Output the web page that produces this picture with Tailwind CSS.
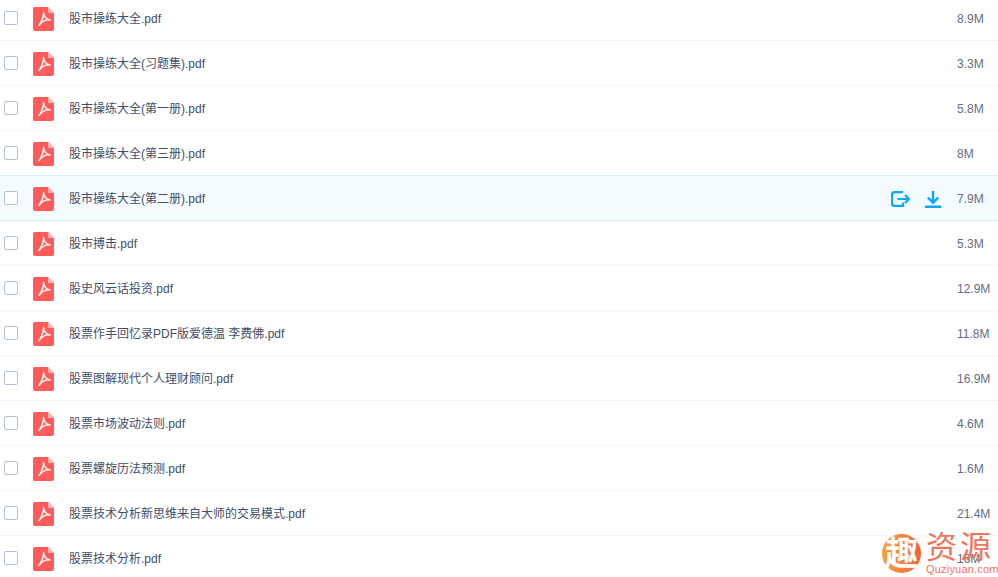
<!DOCTYPE html>
<html lang="en">
<head>
    <meta charset="UTF-8">
    <script src="https://cdn.jsdelivr.net/npm/@tailwindcss/browser@4"></script>
    <title>Files</title>
</head>
<body class="bg-white overflow-hidden h-[577px] relative font-['Liberation_Sans','Noto_Sans_CJK_SC',sans-serif] text-xs text-[#424e67]">

    <!-- File list -->
    <div class="flex flex-col -mt-[4px]">
        <div class="flex items-center h-[45px] border-b border-[#f2f6fd]">
            <span class="w-[14px] h-[14px] ml-[4px] border border-[#b4c2d4] rounded-[2px] bg-white"></span>
            <svg class="w-[21px] h-[24px] ml-[15px] mt-[2px]" viewBox="0 0 21 24"><path d="M2 0h13l6 6v16a2 2 0 0 1-2 2H2a2 2 0 0 1-2-2V2a2 2 0 0 1 2-2z" fill="#ff5b5b"/><path d="M15 0l6 6h-6z" fill="#ffb3b3"/><path d="M10.500 5.500c.3 3.500 2.500 6.500 6.500 7.500c-3.800-.6-7.500 .7-11 5.500c2.600-4 4.800-7.500 4.500-13z" fill="none" stroke="#fff" stroke-width="1.400" stroke-linejoin="round"/></svg>
            <span class="ml-[15px] flex-1 mt-[1px]">股市操练大全.pdf</span>
            <span class="w-[41px] text-[#636d7e] mt-[1px]">8.9M</span>
        </div>
        <div class="flex items-center h-[45px] border-b border-[#f2f6fd]">
            <span class="w-[14px] h-[14px] ml-[4px] border border-[#b4c2d4] rounded-[2px] bg-white"></span>
            <svg class="w-[21px] h-[24px] ml-[15px] mt-[2px]" viewBox="0 0 21 24"><path d="M2 0h13l6 6v16a2 2 0 0 1-2 2H2a2 2 0 0 1-2-2V2a2 2 0 0 1 2-2z" fill="#ff5b5b"/><path d="M15 0l6 6h-6z" fill="#ffb3b3"/><path d="M10.500 5.500c.3 3.500 2.500 6.500 6.500 7.500c-3.800-.6-7.500 .7-11 5.500c2.600-4 4.800-7.500 4.500-13z" fill="none" stroke="#fff" stroke-width="1.400" stroke-linejoin="round"/></svg>
            <span class="ml-[15px] flex-1 mt-[1px]">股市操练大全(习题集).pdf</span>
            <span class="w-[41px] text-[#636d7e] mt-[1px]">3.3M</span>
        </div>
        <div class="flex items-center h-[45px] border-b border-[#f2f6fd]">
            <span class="w-[14px] h-[14px] ml-[4px] border border-[#b4c2d4] rounded-[2px] bg-white"></span>
            <svg class="w-[21px] h-[24px] ml-[15px] mt-[2px]" viewBox="0 0 21 24"><path d="M2 0h13l6 6v16a2 2 0 0 1-2 2H2a2 2 0 0 1-2-2V2a2 2 0 0 1 2-2z" fill="#ff5b5b"/><path d="M15 0l6 6h-6z" fill="#ffb3b3"/><path d="M10.500 5.500c.3 3.500 2.500 6.500 6.500 7.500c-3.800-.6-7.500 .7-11 5.500c2.600-4 4.800-7.500 4.500-13z" fill="none" stroke="#fff" stroke-width="1.400" stroke-linejoin="round"/></svg>
            <span class="ml-[15px] flex-1 mt-[1px]">股市操练大全(第一册).pdf</span>
            <span class="w-[41px] text-[#636d7e] mt-[1px]">5.8M</span>
        </div>
        <div class="flex items-center h-[45px] border-b border-[#f2f6fd]">
            <span class="w-[14px] h-[14px] ml-[4px] border border-[#b4c2d4] rounded-[2px] bg-white"></span>
            <svg class="w-[21px] h-[24px] ml-[15px] mt-[2px]" viewBox="0 0 21 24"><path d="M2 0h13l6 6v16a2 2 0 0 1-2 2H2a2 2 0 0 1-2-2V2a2 2 0 0 1 2-2z" fill="#ff5b5b"/><path d="M15 0l6 6h-6z" fill="#ffb3b3"/><path d="M10.500 5.500c.3 3.500 2.500 6.500 6.500 7.500c-3.800-.6-7.500 .7-11 5.500c2.600-4 4.800-7.500 4.500-13z" fill="none" stroke="#fff" stroke-width="1.400" stroke-linejoin="round"/></svg>
            <span class="ml-[15px] flex-1 mt-[1px]">股市操练大全(第三册).pdf</span>
            <span class="w-[41px] text-[#636d7e] mt-[1px]">8M</span>
        </div>
        <!-- Hovered row -->
        <div class="flex items-center h-[45px] border-b border-[#daf0fd] bg-[#f4fbff] shadow-[0_-1px_0_#daf0fd]">
            <span class="w-[14px] h-[14px] ml-[4px] border border-[#b4c2d4] rounded-[2px] bg-white"></span>
            <svg class="w-[21px] h-[24px] ml-[15px] mt-[2px]" viewBox="0 0 21 24"><path d="M2 0h13l6 6v16a2 2 0 0 1-2 2H2a2 2 0 0 1-2-2V2a2 2 0 0 1 2-2z" fill="#ff5b5b"/><path d="M15 0l6 6h-6z" fill="#ffb3b3"/><path d="M10.500 5.500c.3 3.500 2.500 6.500 6.500 7.500c-3.800-.6-7.500 .7-11 5.500c2.600-4 4.800-7.500 4.500-13z" fill="none" stroke="#fff" stroke-width="1.400" stroke-linejoin="round"/></svg>
            <span class="ml-[15px] flex-1 mt-[1px]">股市操练大全(第二册).pdf</span>
            <svg class="w-[19px] h-[16px] mr-[15px] mt-[2px]" viewBox="0 0 19 16" fill="none" stroke="#06a7ff" stroke-width="2.200"><path d="M12 1.100H3.500a2.400 2.400 0 0 0-2.400 2.400v9a2.400 2.400 0 0 0 2.400 2.400H12V11.500"/><path d="M6.500 8h11M14 4l4 4l-4 4"/></svg>
            <svg class="w-[16px] h-[17px] mr-[16px] mt-[2px]" viewBox="0 0 16 17" fill="none" stroke="#06a7ff" stroke-width="2.400"><path d="M8 0v11M2.800 6.500L8 11.700l5.200-5.200M0 15.700h16"/></svg>
            <span class="w-[41px] text-[#636d7e] mt-[1px]">7.9M</span>
        </div>
        <div class="flex items-center h-[45px] border-b border-[#f2f6fd]">
            <span class="w-[14px] h-[14px] ml-[4px] border border-[#b4c2d4] rounded-[2px] bg-white"></span>
            <svg class="w-[21px] h-[24px] ml-[15px] mt-[2px]" viewBox="0 0 21 24"><path d="M2 0h13l6 6v16a2 2 0 0 1-2 2H2a2 2 0 0 1-2-2V2a2 2 0 0 1 2-2z" fill="#ff5b5b"/><path d="M15 0l6 6h-6z" fill="#ffb3b3"/><path d="M10.500 5.500c.3 3.500 2.500 6.500 6.500 7.500c-3.800-.6-7.500 .7-11 5.500c2.600-4 4.800-7.500 4.500-13z" fill="none" stroke="#fff" stroke-width="1.400" stroke-linejoin="round"/></svg>
            <span class="ml-[15px] flex-1 mt-[1px]">股市搏击.pdf</span>
            <span class="w-[41px] text-[#636d7e] mt-[1px]">5.3M</span>
        </div>
        <div class="flex items-center h-[45px] border-b border-[#f2f6fd]">
            <span class="w-[14px] h-[14px] ml-[4px] border border-[#b4c2d4] rounded-[2px] bg-white"></span>
            <svg class="w-[21px] h-[24px] ml-[15px] mt-[2px]" viewBox="0 0 21 24"><path d="M2 0h13l6 6v16a2 2 0 0 1-2 2H2a2 2 0 0 1-2-2V2a2 2 0 0 1 2-2z" fill="#ff5b5b"/><path d="M15 0l6 6h-6z" fill="#ffb3b3"/><path d="M10.500 5.500c.3 3.500 2.500 6.500 6.500 7.500c-3.800-.6-7.500 .7-11 5.500c2.600-4 4.800-7.500 4.500-13z" fill="none" stroke="#fff" stroke-width="1.400" stroke-linejoin="round"/></svg>
            <span class="ml-[15px] flex-1 mt-[1px]">股史风云话投资.pdf</span>
            <span class="w-[41px] text-[#636d7e] mt-[1px]">12.9M</span>
        </div>
        <div class="flex items-center h-[45px] border-b border-[#f2f6fd]">
            <span class="w-[14px] h-[14px] ml-[4px] border border-[#b4c2d4] rounded-[2px] bg-white"></span>
            <svg class="w-[21px] h-[24px] ml-[15px] mt-[2px]" viewBox="0 0 21 24"><path d="M2 0h13l6 6v16a2 2 0 0 1-2 2H2a2 2 0 0 1-2-2V2a2 2 0 0 1 2-2z" fill="#ff5b5b"/><path d="M15 0l6 6h-6z" fill="#ffb3b3"/><path d="M10.500 5.500c.3 3.500 2.500 6.500 6.500 7.500c-3.800-.6-7.500 .7-11 5.500c2.600-4 4.800-7.500 4.500-13z" fill="none" stroke="#fff" stroke-width="1.400" stroke-linejoin="round"/></svg>
            <span class="ml-[15px] flex-1 mt-[1px]">股票作手回忆录PDF版爱德温 李费佛.pdf</span>
            <span class="w-[41px] text-[#636d7e] mt-[1px]">11.8M</span>
        </div>
        <div class="flex items-center h-[45px] border-b border-[#f2f6fd]">
            <span class="w-[14px] h-[14px] ml-[4px] border border-[#b4c2d4] rounded-[2px] bg-white"></span>
            <svg class="w-[21px] h-[24px] ml-[15px] mt-[2px]" viewBox="0 0 21 24"><path d="M2 0h13l6 6v16a2 2 0 0 1-2 2H2a2 2 0 0 1-2-2V2a2 2 0 0 1 2-2z" fill="#ff5b5b"/><path d="M15 0l6 6h-6z" fill="#ffb3b3"/><path d="M10.500 5.500c.3 3.500 2.500 6.500 6.500 7.500c-3.800-.6-7.500 .7-11 5.500c2.600-4 4.800-7.500 4.500-13z" fill="none" stroke="#fff" stroke-width="1.400" stroke-linejoin="round"/></svg>
            <span class="ml-[15px] flex-1 mt-[1px]">股票图解现代个人理财顾问.pdf</span>
            <span class="w-[41px] text-[#636d7e] mt-[1px]">16.9M</span>
        </div>
        <div class="flex items-center h-[45px] border-b border-[#f2f6fd]">
            <span class="w-[14px] h-[14px] ml-[4px] border border-[#b4c2d4] rounded-[2px] bg-white"></span>
            <svg class="w-[21px] h-[24px] ml-[15px] mt-[2px]" viewBox="0 0 21 24"><path d="M2 0h13l6 6v16a2 2 0 0 1-2 2H2a2 2 0 0 1-2-2V2a2 2 0 0 1 2-2z" fill="#ff5b5b"/><path d="M15 0l6 6h-6z" fill="#ffb3b3"/><path d="M10.500 5.500c.3 3.500 2.500 6.500 6.500 7.500c-3.800-.6-7.500 .7-11 5.500c2.600-4 4.800-7.500 4.500-13z" fill="none" stroke="#fff" stroke-width="1.400" stroke-linejoin="round"/></svg>
            <span class="ml-[15px] flex-1 mt-[1px]">股票市场波动法则.pdf</span>
            <span class="w-[41px] text-[#636d7e] mt-[1px]">4.6M</span>
        </div>
        <div class="flex items-center h-[45px] border-b border-[#f2f6fd]">
            <span class="w-[14px] h-[14px] ml-[4px] border border-[#b4c2d4] rounded-[2px] bg-white"></span>
            <svg class="w-[21px] h-[24px] ml-[15px] mt-[2px]" viewBox="0 0 21 24"><path d="M2 0h13l6 6v16a2 2 0 0 1-2 2H2a2 2 0 0 1-2-2V2a2 2 0 0 1 2-2z" fill="#ff5b5b"/><path d="M15 0l6 6h-6z" fill="#ffb3b3"/><path d="M10.500 5.500c.3 3.500 2.500 6.500 6.500 7.500c-3.800-.6-7.500 .7-11 5.500c2.600-4 4.800-7.500 4.500-13z" fill="none" stroke="#fff" stroke-width="1.400" stroke-linejoin="round"/></svg>
            <span class="ml-[15px] flex-1 mt-[1px]">股票螺旋历法预测.pdf</span>
            <span class="w-[41px] text-[#636d7e] mt-[1px]">1.6M</span>
        </div>
        <div class="flex items-center h-[45px] border-b border-[#f2f6fd]">
            <span class="w-[14px] h-[14px] ml-[4px] border border-[#b4c2d4] rounded-[2px] bg-white"></span>
            <svg class="w-[21px] h-[24px] ml-[15px] mt-[2px]" viewBox="0 0 21 24"><path d="M2 0h13l6 6v16a2 2 0 0 1-2 2H2a2 2 0 0 1-2-2V2a2 2 0 0 1 2-2z" fill="#ff5b5b"/><path d="M15 0l6 6h-6z" fill="#ffb3b3"/><path d="M10.500 5.500c.3 3.500 2.500 6.500 6.500 7.500c-3.800-.6-7.500 .7-11 5.500c2.600-4 4.800-7.500 4.500-13z" fill="none" stroke="#fff" stroke-width="1.400" stroke-linejoin="round"/></svg>
            <span class="ml-[15px] flex-1 mt-[1px]">股票技术分析新思维来自大师的交易模式.pdf</span>
            <span class="w-[41px] text-[#636d7e] mt-[1px]">21.4M</span>
        </div>
        <div class="flex items-center h-[45px] border-b border-[#f2f6fd]">
            <span class="w-[14px] h-[14px] ml-[4px] border border-[#b4c2d4] rounded-[2px] bg-white"></span>
            <svg class="w-[21px] h-[24px] ml-[15px] mt-[2px]" viewBox="0 0 21 24"><path d="M2 0h13l6 6v16a2 2 0 0 1-2 2H2a2 2 0 0 1-2-2V2a2 2 0 0 1 2-2z" fill="#ff5b5b"/><path d="M15 0l6 6h-6z" fill="#ffb3b3"/><path d="M10.500 5.500c.3 3.500 2.500 6.500 6.500 7.500c-3.800-.6-7.500 .7-11 5.500c2.600-4 4.800-7.500 4.500-13z" fill="none" stroke="#fff" stroke-width="1.400" stroke-linejoin="round"/></svg>
            <span class="ml-[15px] flex-1 mt-[1px]">股票技术分析.pdf</span>
            <span class="w-[41px] text-[#636d7e] mt-[1px]">16M</span>
        </div>
    </div>

    <!-- Watermark -->
    <div class="absolute left-[882px] top-[534px] flex items-start">
        <div class="w-[39px] h-[39px] rounded-full bg-gradient-to-r from-[#f5a33c] to-[#f2603c] flex items-center justify-center text-white text-[33px] leading-none font-bold">趣</div>
        <div class="ml-[5px] -mt-[2px] w-[68px] flex flex-col text-[#f0745a]">
            <span class="text-[31px] leading-[32px] tracking-[3px] whitespace-nowrap">资源</span>
            <span class="text-[11px] leading-[11px] tracking-[.2px] whitespace-nowrap">Quziyuan.com</span>
        </div>
    </div>

</body>
</html>
